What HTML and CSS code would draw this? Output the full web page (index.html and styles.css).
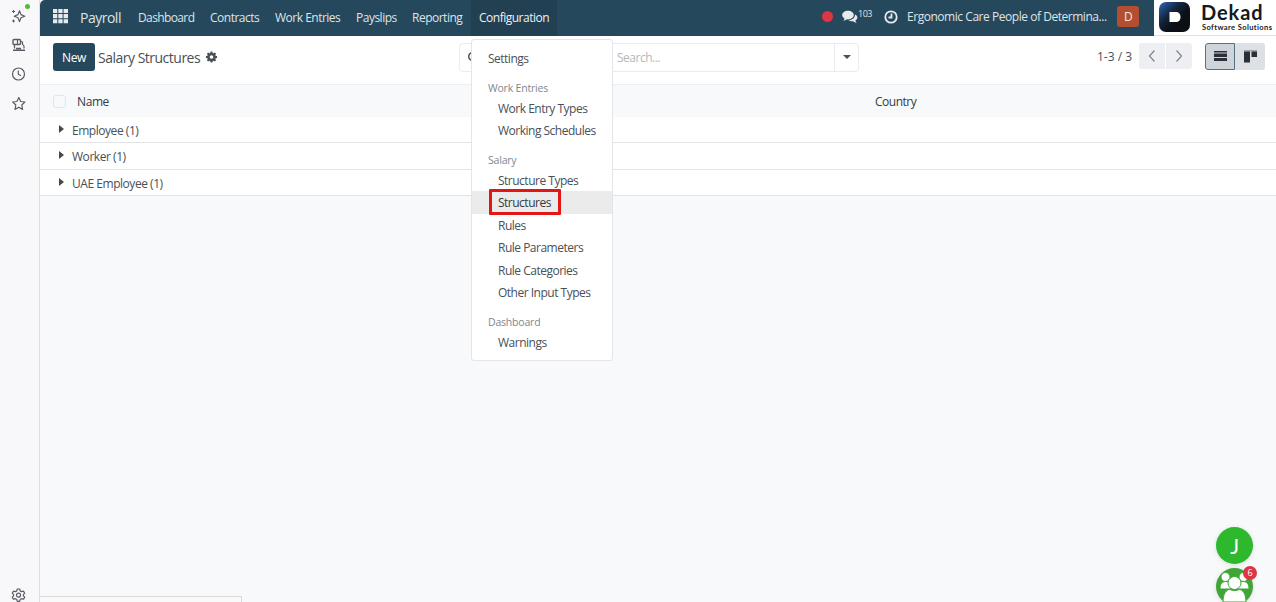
FILE: index.html
```
<!DOCTYPE html>
<html lang="en">

<head>
    <meta charset="UTF-8">
    <meta name="viewport" content="width=device-width, initial-scale=1.0">
    <title>Salary Structures</title>
    <link rel="stylesheet" href="styles.css">
</head>

<body>
    <aside class="sidebar">
        <div class="side-icon">
            <svg width="16" height="16" viewBox="0 0 16 16" class="line">
                <path d="M9.500 2.800 L11 6.600 L14.800 8.200 L11 9.800 L9.500 13.600 L8 9.800 L4.200 8.200 L8 6.600 Z" />
                <path d="M3.500 2v3M2 3.500h3M3.500 11.500v3M2 13h3" stroke-width="1" />
            </svg>
            <span class="online-dot"></span>
        </div>
        <div class="side-icon">
            <svg width="16" height="16" viewBox="0 0 16 16" class="line">
                <rect x="3" y="2.500" width="7.500" height="5" rx="1" stroke-width="1.4" />
                <path d="M7.500 2.500v5M4.500 7.500v4M10.500 4.500h1q1 0 1 1v2q1.500.5 1.500 2v2" />
                <path d="M3 13.200h12M6 11.500h5" stroke-width="1.600" />
            </svg>
        </div>
        <div class="side-icon">
            <svg width="16" height="16" viewBox="0 0 16 16" class="line">
                <circle cx="8.500" cy="8" r="6" />
                <path d="M8.300 4.500V8.300L11 9.700" />
            </svg>
        </div>
        <div class="side-icon">
            <svg width="16" height="16" viewBox="0 0 16 16" class="line">
                <path d="M8.800 1.500l1.900 4 4.200.5-3.100 3 .8 4.400-3.800-2.100-3.800 2.100.8-4.400-3.100-3L6.900 5.500z" />
            </svg>
        </div>
        <div class="side-icon side-bottom">
            <svg width="16" height="16" viewBox="0 0 16 16" class="line">
                <path d="M7.300 2h2.400l.5 1.900 1.500.8 1.900-.5 1.100 2-1.300 1.400v1.200l1.300 1.400-1.100 2-1.900-.5-1.500.8-.5 1.900H7.300l-.5-1.900-1.500-.8-1.900.5-1.100-2 1.300-1.400V7.600L2.300 6.200l1.100-2 1.900.5 1.500-.8z" />
                <circle cx="8.500" cy="8.200" r="2" />
            </svg>
        </div>
    </aside>

    <div class="app">
        <header class="topbar">
            <nav class="navbar">
                <svg class="apps" width="15" height="15" viewBox="0 0 15 15">
                    <path d="M0 0h4.300v4H0zM5.300 0h4.300v4H5.300zM10.600 0H15v4h-4.400zM0 5h4.300v4.300H0zM5.300 5h4.300v4.300H5.300zM10.600 5H15v4.300h-4.400zM0 10.300h4.300v4H0zM5.300 10.300h4.300v4H5.300zM10.600 10.300H15v4h-4.400z" />
                </svg>
                <span class="brand">Payroll</span>
                <a class="nav-link dashboard">Dashboard</a>
                <a class="nav-link contracts">Contracts</a>
                <a class="nav-link entries">Work Entries</a>
                <a class="nav-link payslips">Payslips</a>
                <a class="nav-link reporting">Reporting</a>
                <a class="nav-link configuration active">Configuration</a>
                <div class="systray">
                    <span class="red-dot"></span>
                    <svg class="chat" width="16" height="14" viewBox="0 0 16 14">
                        <path d="M6 .8c3.200 0 5.800 1.900 5.800 4.300S9.200 9.400 6 9.400l-1-.1C4 10.100 2.800 10.700 1.200 10.800c.7-.6 1.200-1.200 1.300-2.200C1.100 7.800.2 6.500.2 5.100.2 2.700 2.800.8 6 .8z" />
                        <path d="M13 4.500c1.500.7 2.400 1.800 2.400 3.100 0 1.200-.8 2.200-2 2.900.1.900.6 1.600 1.300 2.200-1.600-.1-2.700-.6-3.700-1.500-1.800.3-3.500-.1-4.700-.9 3.800-.1 6.900-2.400 6.700-5.800z" />
                    </svg>
                    <sup class="count">103</sup>
                    <svg class="clock" width="14" height="14" viewBox="0 0 14 14">
                        <circle cx="7" cy="7" r="5.700" />
                        <path d="M7.500 3.500v4H4.500" />
                    </svg>
                    <span class="company">Ergonomic Care People of Determina...</span>
                    <span class="avatar">D</span>
                </div>
            </nav>
            <div class="logo">
                <svg width="33" height="32" viewBox="0 0 33 32">
                    <defs>
                        <linearGradient id="logo-bg" x1="0" y1="0" x2=".8" y2=".8">
                            <stop offset="0" stop-color="#2c68bd" />
                            <stop offset=".45" stop-color="#142640" />
                            <stop offset=".75" stop-color="#0c1016" />
                        </linearGradient>
                    </defs>
                    <rect x="1" y="1" width="31" height="30" rx="7" fill="url(#logo-bg)" />
                    <path d="M11.500 11h6c3.500 0 5 2 5 5s-1.500 5-5 5h-6z" fill="#fff" />
                </svg>
                <div class="logo-text">
                    <strong>Dekad</strong>
                    <small>Software Solutions</small>
                </div>
            </div>
        </header>

        <section class="control-panel">
            <button class="btn-new">New</button>
            <h1 class="title">Salary Structures</h1>
            <svg class="cog" width="11" height="12" viewBox="0 0 12 12">
                <path fill-rule="evenodd" d="M5 0h2l.3 1.500 1 .4L9.600 1 11 2.400l-.9 1.300.4 1L12 5v2l-1.500.3-.4 1L11 9.600 9.600 11l-1.300-.9-1 .4L7 12H5l-.3-1.500-1-.4L2.400 11 1 9.600l.9-1.300-.4-1L0 7V5l1.500-.3.4-1L1 2.400 2.400 1l1.300.9 1-.4zM6 4a2 2 0 1 0 0 4 2 2 0 0 0 0-4z" />
            </svg>
            <div class="search">
                <svg class="search-icon" width="11" height="12" viewBox="0 0 11 12">
                    <circle cx="5.500" cy="5.500" r="3.800" />
                    <path d="M8 8.500l2.500 2.500" />
                </svg>
                <span class="placeholder">Search...</span>
                <span class="search-toggle"><i class="caret"></i></span>
            </div>
            <span class="pager">1-3 / 3</span>
            <div class="pager-buttons">
                <span><svg width="10" height="14" viewBox="0 0 10 14"><path d="M7.500 1.500L2.500 7l5 5.500" /></svg></span>
                <span><svg width="10" height="14" viewBox="0 0 10 14"><path d="M2.500 1.500l5 5.500-5 5.500" /></svg></span>
            </div>
            <div class="views">
                <span class="view active"><svg width="13" height="10" viewBox="0 0 13 10"><path d="M0 0h13v1.500H0zM0 2.500h13V6H0zM0 7h13v3H0z" /></svg></span>
                <span class="view"><svg width="13" height="13" viewBox="0 0 13 13"><path d="M0 0h13v1.500H0z" opacity=".35" /><path d="M0 1.500h6V12.500H0zM7.500 1.500H13V7H7.500z" /></svg></span>
            </div>
        </section>

        <main class="list">
            <div class="list-head">
                <span class="checkbox"></span>
                <span class="col-name">Name</span>
                <span class="col-country">Country</span>
            </div>
            <div class="group-row"><i class="arrow"></i>Employee (1)</div>
            <div class="group-row"><i class="arrow"></i>Worker (1)</div>
            <div class="group-row"><i class="arrow"></i>UAE Employee (1)</div>
        </main>
    </div>

    <div class="dropdown">
        <a class="item top">Settings</a>
        <div class="heading">Work Entries</div>
        <a class="item">Work Entry Types</a>
        <a class="item">Working Schedules</a>
        <div class="heading">Salary</div>
        <a class="item">Structure Types</a>
        <a class="item selected">Structures<span class="highlight"></span></a>
        <a class="item">Rules</a>
        <a class="item">Rule Parameters</a>
        <a class="item">Rule Categories</a>
        <a class="item">Other Input Types</a>
        <div class="heading">Dashboard</div>
        <a class="item">Warnings</a>
    </div>

    <div class="chat-heads">
        <div class="head">J</div>
        <div class="head group">
            <svg width="37" height="37" viewBox="0 0 37 37">
                <g fill="#fff" stroke="#3fa535">
                    <circle cx="9.500" cy="9" r="4.500" />
                    <circle cx="27.500" cy="9" r="4.500" />
                    <path d="M4 21c0-5 2-7.500 6-7.500s6 2.500 6 7.500zM21 21c0-5 2-7.500 6-7.500s6 2.500 6 7.500z" />
                    <circle cx="18.500" cy="15" r="6.500" />
                    <path d="M7 34c0-8 3-12.500 7-12.500 3 1.500 6 1.500 9 0 4 0 7 4.500 7 12.500z" />
                </g>
            </svg>
            <span class="badge">6</span>
        </div>
    </div>
    <div class="status-bubble"></div>
</body>

</html>
```
FILE: styles.css
```
* {
    box-sizing: border-box;
}

body {
    display: flex;
    height: 602px;
    margin: 0;
    overflow: hidden;
    background-color: #f8f9fb;
    color: #495057;
    font-family: "Open Sans", "Noto Sans", sans-serif;
    font-size: 12px;
    letter-spacing: -0.5px;
}

/* left browser rail */
.sidebar {
    display: flex;
    flex-direction: column;
    width: 40px;
    padding-top: 1px;
    border-right: 1px solid #dcdde0;
    background-color: #f8f8fb;
}

.side-icon {
    position: relative;
    height: 29.2px;
    padding: 7px 0 0 10px;
}

.side-icon svg {
    display: block;
}

.side-icon.side-bottom {
    height: 22px;
    margin-top: auto;
}

.line {
    fill: none;
    stroke: #5b5b66;
    stroke-width: 1.2;
    stroke-linejoin: round;
}

.online-dot {
    position: absolute;
    top: 3px;
    left: 25px;
    width: 5px;
    height: 5px;
    border-radius: 50%;
    background-color: #4fbb37;
}

.app {
    flex: 1;
    min-width: 0;
}

.topbar {
    display: flex;
    height: 36px;
}

.navbar {
    display: flex;
    flex: 1;
    align-items: center;
    padding-left: 13px;
    border-top-left-radius: 5px;
    background-color: #26485c;
    color: #dfe4e8;
}

.apps {
    margin-right: 12px;
    margin-bottom: 3px;
    fill: #e6eaed;
}

.brand {
    width: 50px;
    margin-bottom: 2px;
    font-size: 14px;
}

.nav-link {
    height: 36px;
    padding-left: 8px;
    line-height: 35px;
    white-space: nowrap;
}

.dashboard {
    width: 72px;
    letter-spacing: -0.62px;
}

.contracts {
    width: 65px;
}

.entries {
    width: 81px;
}

.payslips {
    width: 56px;
}

.reporting {
    width: 67px;
}

.configuration {
    width: 86px;
}

.nav-link.active {
    background-color: #234053;
    color: #edf0f2;
}

.systray {
    display: flex;
    align-items: center;
    height: 33px;
    margin-bottom: 3px;
    margin-left: auto;
    padding-right: 15px;
}

.red-dot {
    width: 11px;
    height: 11px;
    margin-right: 9px;
    border-radius: 50%;
    background-color: #dc3545;
}

.chat {
    fill: #e6eaed;
}

.count {
    width: 26px;
    margin-top: -6px;
    font-size: 9px;
    letter-spacing: -0.5px;
    line-height: 12px;
}

.clock {
    margin-right: 9px;
    fill: none;
    stroke: #e6eaed;
    stroke-width: 1.8;
}

.company {
    width: 210px;
    letter-spacing: -0.46px;
    white-space: nowrap;
}

.avatar {
    width: 22px;
    height: 21px;
    border-radius: 3px;
    background-color: #b34e31;
    color: #f6e7e2;
    line-height: 21px;
    text-align: center;
}

.logo {
    display: flex;
    width: 122px;
    padding: 1px 0 0 4px;
    border-bottom: 1px solid #dee2e6;
    background-color: #fff;
}

.logo-text {
    display: flex;
    flex-direction: column;
    margin-left: 10px;
    color: #17181b;
    font-family: Lato, sans-serif;
    white-space: nowrap;
}

.logo-text strong {
    font-size: 20px;
    letter-spacing: 0.9px;
    line-height: 23px;
}

.logo-text small {
    margin-top: -1px;
    margin-left: 1px;
    font-size: 7.5px;
    font-weight: bold;
    letter-spacing: 0.4px;
    line-height: 10px;
}

.control-panel {
    display: flex;
    align-items: center;
    height: 49px;
    padding: 0 11px 6px 13px;
    border-bottom: 1px solid #edeff1;
    background-color: #fff;
}

.btn-new {
    width: 42px;
    height: 28px;
    padding: 0;
    border: 0;
    border-radius: 3px;
    background-color: #26485c;
    color: #fff;
    font: inherit;
    letter-spacing: -0.3px;
}

.title {
    width: 108px;
    margin: 0 0 0 3px;
    font-size: 14px;
    font-weight: normal;
    white-space: nowrap;
}

.cog {
    fill: #495057;
}

.search {
    display: flex;
    align-items: center;
    width: 400px;
    height: 29px;
    margin-left: 242px;
    border: 1px solid #e9ebee;
    border-radius: 4px;
}

.search-icon {
    margin-left: 7px;
    fill: none;
    stroke: #495057;
    stroke-width: 1.5;
}

.placeholder {
    margin-left: 139px;
    color: #b4b8bc;
}

.search-toggle {
    display: flex;
    align-items: center;
    justify-content: center;
    width: 24px;
    height: 100%;
    margin-left: auto;
    border-left: 1px solid #e9ebee;
}

.caret {
    border: 4px solid transparent;
    border-top-color: #495057;
    border-bottom: 0;
}

.pager {
    width: 42px;
    margin-bottom: 2px;
    margin-left: auto;
    letter-spacing: 0;
    white-space: nowrap;
}

.pager-buttons {
    display: flex;
    gap: 1px;
    width: 53px;
    height: 26px;
    margin-bottom: 2px;
    border-radius: 3px;
    overflow: hidden;
}

.pager-buttons span {
    display: flex;
    flex: 1;
    align-items: center;
    justify-content: center;
    background-color: #eeeff2;
}

.pager-buttons svg {
    fill: none;
    stroke: #85898e;
    stroke-width: 1.3;
}

.views {
    display: flex;
    margin-bottom: 2px;
    margin-left: 13px;
}

.view {
    display: flex;
    align-items: center;
    justify-content: center;
    width: 30px;
    height: 27px;
    border-radius: 0 3px 3px 0;
    background-color: #dde1e6;
    fill: #2b3036;
}

.view.active {
    border: 1px solid #577182;
    border-radius: 3px 0 0 3px;
    background-color: #cdd4da;
}

.list-head {
    display: flex;
    align-items: center;
    height: 32px;
    padding-left: 13px;
    background-color: #f8f9fb;
    color: #343a40;
}

.checkbox {
    width: 13px;
    height: 13px;
    border: 1px solid #e3e6e9;
    border-radius: 3px;
}

.col-name {
    width: 798px;
    margin-left: 11px;
    letter-spacing: -0.4px;
}

.group-row {
    display: flex;
    align-items: center;
    height: 26.3px;
    padding: 2px 0 0 19px;
    border-bottom: 1px solid #e1e3e6;
    background-color: #fff;
    letter-spacing: -0.46px;
}

.arrow {
    margin-right: 8px;
    margin-bottom: 3px;
    border: 4px solid transparent;
    border-left: 5px solid #414a52;
    border-right: 0;
}

/* configuration menu, open over the list */
.dropdown {
    position: absolute;
    top: 39px;
    left: 471px;
    width: 142px;
    height: 322px;
    padding-top: 7px;
    border: 1px solid #e3e5e8;
    border-radius: 3px;
    background-color: #fff;
}

.item {
    display: block;
    position: relative;
    height: 22.5px;
    padding-left: 26px;
    line-height: 24px;
    white-space: nowrap;
}

.item.top {
    padding-left: 16px;
}

.item.selected {
    background-color: #ebebeb;
    color: #343a40;
}

.highlight {
    position: absolute;
    top: -2px;
    left: 17px;
    width: 72px;
    height: 26px;
    border: 3px solid #e31616;
    border-radius: 1px;
}

.heading {
    height: 27.2px;
    padding: 9px 0 0 16px;
    color: #81878d;
    font-size: 10.5px;
    letter-spacing: -0.2px;
    line-height: 18px;
}

.chat-heads {
    position: absolute;
    top: 527px;
    left: 1216px;
}

.head {
    width: 37px;
    height: 37px;
    margin-bottom: 4px;
    border-radius: 50%;
    background-color: #2eb82e;
    box-shadow: 0 1px 5px rgba(0, 0, 0, 0.12);
    color: #fff;
    font-family: Lato, sans-serif;
    font-size: 21px;
    line-height: 37px;
    text-align: center;
}

.group {
    position: relative;
    background-color: #3fa535;
}

.badge {
    position: absolute;
    top: -2px;
    right: -4px;
    width: 14px;
    height: 14px;
    border-radius: 50%;
    background-color: #dc3545;
    font-family: "Open Sans", sans-serif;
    font-size: 9px;
    letter-spacing: 0;
    line-height: 14px;
}

.status-bubble {
    position: absolute;
    bottom: 0;
    left: 40px;
    width: 202px;
    height: 6px;
    border: 1px solid #d9dadd;
    border-width: 1px 1px 0 0;
    background-color: #f9f9fa;
}
```
